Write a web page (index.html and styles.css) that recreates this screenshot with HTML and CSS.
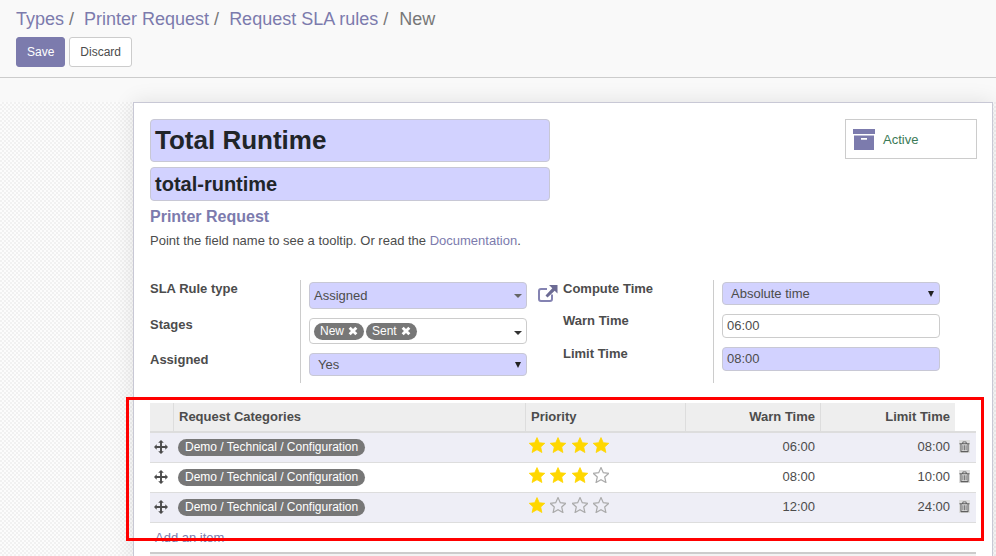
FILE: index.html
```html
<!DOCTYPE html>
<html lang="en">
<head>
    <meta charset="UTF-8">
    <meta name="viewport" content="width=device-width, initial-scale=1.0">
    <title>Request SLA rules - New</title>
    <link rel="stylesheet" href="styles.css">
</head>
<body>
    <svg class="icon-defs" width="0" height="0">
        <defs>
            <polygon id="star-shape" points="8,0.6 10.3,5.7 15.8,6.3 11.7,10 12.9,15.5 8,12.7 3.1,15.5 4.3,10 0.2,6.3 5.7,5.7"/>
            <path id="move-shape" d="M7 0 L10.2 3.1 H8.1 V6.9 H11.9 V4.8 L15 8 L11.9 11.2 V9.1 H8.1 V12.9 H10.2 L7 16 L3.8 12.9 H5.9 V9.1 H2.1 V11.2 L-1 8 L2.1 4.8 V6.9 H5.9 V3.1 H3.8 Z"/>
            <g id="trash-shape">
                <path d="M4 1.2 H7.5 L8.3 3 H11 V4.1 H10 V11.6 Q10 12.4 9.2 12.4 H2.3 Q1.5 12.4 1.5 11.6 V4.1 H0.5 V3 H3.2 Z M4.4 3 H7.1 L6.8 2.1 H4.7 Z M2.6 4.1 V11.3 H8.9 V4.1 Z M3.7 5.2 H4.5 V10.4 H3.7 Z M5.4 5.2 H6.2 V10.4 H5.4 Z M7 5.2 H7.8 V10.4 H7 Z" fill-rule="evenodd"/>
            </g>
        </defs>
    </svg>

    <!-- Control panel -->
    <header class="control-panel">
        <ol class="breadcrumb">
            <li><a>Types</a></li>
            <li><a>Printer Request</a></li>
            <li><a>Request SLA rules</a></li>
            <li class="active">New</li>
        </ol>
        <div class="buttons">
            <button class="btn btn-primary">Save</button>
            <button class="btn">Discard</button>
        </div>
    </header>

    <main class="view">
        <div class="sheet">
            <div class="title-row">
                <div class="title-fields">
                    <div class="req title-input">Total Runtime</div>
                    <div class="req code-input">total-runtime</div>
                    <div class="parent-name">Printer Request</div>
                    <p class="help">Point the field name to see a tooltip. Or read the <a>Documentation</a>.</p>
                </div>
                <div class="stat-button">
                    <svg class="archive-icon" width="22" height="21" viewBox="0 0 22 21">
                        <rect x="0" y="0" width="22" height="5"/>
                        <path d="M1 6.5 H21 V21 H1 Z M8 9 V10.8 H14 V9 Z" fill-rule="evenodd"/>
                    </svg>
                    <span>Active</span>
                </div>
            </div>

            <div class="groups">
                <div class="group group-left">
                    <div class="labels">
                        <label>SLA Rule type</label>
                        <label>Stages</label>
                        <label>Assigned</label>
                    </div>
                    <div class="fields">
                        <div class="field-row">
                            <div class="req select select-tall">Assigned<i class="caret caret-gray"></i></div>
                        </div>
                        <div class="field-row">
                            <div class="tags-input">
                                <span class="tag">New <svg class="tag-x" width="10" height="10" viewBox="0 0 9 9"><path d="M1.5 1.5 L7.5 7.5 M7.5 1.5 L1.5 7.5"/></svg></span>
                                <span class="tag">Sent <svg class="tag-x" width="10" height="10" viewBox="0 0 9 9"><path d="M1.5 1.5 L7.5 7.5 M7.5 1.5 L1.5 7.5"/></svg></span>
                                <i class="caret caret-push"></i>
                            </div>
                        </div>
                        <div class="field-row">
                            <div class="req select select-yes">Yes<i class="caret caret-big"></i></div>
                        </div>
                    </div>
                </div>

                <svg class="external-icon" width="20" height="17" viewBox="0 0 20 17">
                    <path d="M14 9.5 V14 Q14 16 12 16 H3 Q1 16 1 14 V6 Q1 4 3 4 H9" fill="none" stroke="#8483b2" stroke-width="2"/>
                    <path d="M11 0 H19.5 V8.5 L16.7 5.7 L9.5 12.5 L7.5 10.5 L14.3 3.3 Z" fill="#6c6b94"/>
                </svg>

                <div class="group group-right">
                    <div class="labels">
                        <label>Compute Time</label>
                        <label>Warn Time</label>
                        <label>Limit Time</label>
                    </div>
                    <div class="fields">
                        <div class="field-row">
                            <div class="req select select-time">Absolute time<i class="caret caret-big"></i></div>
                        </div>
                        <div class="field-row">
                            <div class="text-input">06:00</div>
                        </div>
                        <div class="field-row">
                            <div class="req text-input">08:00</div>
                        </div>
                    </div>
                </div>
            </div>

            <section class="lines">
                <table class="list">
                    <thead>
                        <tr>
                            <th class="col-handle"></th>
                            <th class="col-cat">Request Categories</th>
                            <th class="col-priority">Priority</th>
                            <th class="col-warn num">Warn Time</th>
                            <th class="col-limit num">Limit Time</th>
                            <th class="col-del"></th>
                        </tr>
                    </thead>
                    <tbody>
                        <tr class="odd">
                            <td><svg class="move" width="14" height="16" viewBox="-1 0 16 16"><use href="#move-shape"/></svg></td>
                            <td class="cat"><span class="chip">Demo / Technical / Configuration</span></td>
                            <td>
                                <div class="stars">
                                    <svg class="star on" viewBox="0 0 16 16"><use href="#star-shape"/></svg>
                                    <svg class="star on" viewBox="0 0 16 16"><use href="#star-shape"/></svg>
                                    <svg class="star on" viewBox="0 0 16 16"><use href="#star-shape"/></svg>
                                    <svg class="star on" viewBox="0 0 16 16"><use href="#star-shape"/></svg>
                                </div>
                            </td>
                            <td class="num warn">06:00</td>
                            <td class="num">08:00</td>
                            <td class="del"><svg class="trash" width="11" height="13" viewBox="0 0 11.5 13"><use href="#trash-shape"/></svg></td>
                        </tr>
                        <tr>
                            <td><svg class="move" width="14" height="16" viewBox="-1 0 16 16"><use href="#move-shape"/></svg></td>
                            <td class="cat"><span class="chip">Demo / Technical / Configuration</span></td>
                            <td>
                                <div class="stars">
                                    <svg class="star on" viewBox="0 0 16 16"><use href="#star-shape"/></svg>
                                    <svg class="star on" viewBox="0 0 16 16"><use href="#star-shape"/></svg>
                                    <svg class="star on" viewBox="0 0 16 16"><use href="#star-shape"/></svg>
                                    <svg class="star" viewBox="0 0 16 16"><use href="#star-shape"/></svg>
                                </div>
                            </td>
                            <td class="num warn">08:00</td>
                            <td class="num">10:00</td>
                            <td class="del"><svg class="trash" width="11" height="13" viewBox="0 0 11.5 13"><use href="#trash-shape"/></svg></td>
                        </tr>
                        <tr class="odd">
                            <td><svg class="move" width="14" height="16" viewBox="-1 0 16 16"><use href="#move-shape"/></svg></td>
                            <td class="cat"><span class="chip">Demo / Technical / Configuration</span></td>
                            <td>
                                <div class="stars">
                                    <svg class="star on" viewBox="0 0 16 16"><use href="#star-shape"/></svg>
                                    <svg class="star" viewBox="0 0 16 16"><use href="#star-shape"/></svg>
                                    <svg class="star" viewBox="0 0 16 16"><use href="#star-shape"/></svg>
                                    <svg class="star" viewBox="0 0 16 16"><use href="#star-shape"/></svg>
                                </div>
                            </td>
                            <td class="num warn">12:00</td>
                            <td class="num">24:00</td>
                            <td class="del"><svg class="trash" width="11" height="13" viewBox="0 0 11.5 13"><use href="#trash-shape"/></svg></td>
                        </tr>
                    </tbody>
                </table>
                <div class="add-line"><a>Add an item</a></div>
                <div class="list-foot"></div>
                <!-- Red highlight drawn over the screenshot -->
                <div class="highlight"></div>
            </section>
        </div>
    </main>
</body>
</html>
```

FILE: styles.css
```css
* {
    box-sizing: border-box;
}
html, body {
    height: 100%;
}
body {
    margin: 0;
    overflow: hidden;
    font-family: "Liberation Sans", Arial, sans-serif;
    font-size: 13px;
    color: #4c4c4c;
    background-color: #f9f9f9;
}
a {
    color: #7c7bad;
}
.icon-defs {
    position: absolute;
}

/* Control panel */
.control-panel {
    height: 78px;
    padding: 10px 16px 0;
    border-bottom: 1px solid #ccc;
}
.breadcrumb {
    display: flex;
    margin: 0;
    padding: 0;
    list-style: none;
    font-size: 18px;
    line-height: 18px;
}
.breadcrumb li:not(:last-child)::after {
    content: "/";
    color: #777;
    padding: 0 10px 0 5px;
}
.breadcrumb li:nth-child(3)::after {
    padding-right: 11px;
}
.breadcrumb .active {
    color: #777;
}
.buttons {
    display: flex;
    gap: 4px;
    margin-top: 9px;
}
.btn {
    height: 30px;
    padding: 0 10px;
    font-family: inherit;
    font-size: 12px;
    color: #4c4c4c;
    background-color: #fff;
    border: 1px solid #ccc;
    border-radius: 3px;
}
.btn-primary {
    color: #fff;
    background-color: #7c7bad;
    border-color: #7c7bad;
}

/* Sheet */
.view {
    height: 478px;
    padding-top: 24px;
    background-image:
        linear-gradient(#f9f9f9, #f9f9f9),
        repeating-conic-gradient(#f1f1f1 0 25%, #fcfcfc 0 50%);
    background-size: 100% 24px, 4px 4px;
    background-repeat: no-repeat, repeat;
}
.sheet {
    position: relative;
    width: 860px;
    height: 460px;
    margin-left: 133px;
    padding: 16px 16px 0;
    background-color: #fff;
    border: 1px solid #c8c8d5;
    box-shadow: 0 0 20px rgba(0, 0, 0, 0.1);
}
.req {
    background-color: #d2d2ff;
    border: 1px solid #c8c8d5;
    border-radius: 4px;
}
.title-row {
    display: flex;
    justify-content: space-between;
    align-items: flex-start;
}
.title-fields {
    width: 400px;
}
.title-input {
    height: 43px;
    padding-left: 4px;
    font-size: 26px;
    font-weight: bold;
    line-height: 41px;
    color: #212529;
}
.code-input {
    height: 34px;
    margin-top: 5px;
    padding-left: 4px;
    font-size: 20px;
    font-weight: bold;
    line-height: 32px;
    color: #212529;
}
.parent-name {
    margin-top: 7px;
    font-size: 16px;
    font-weight: bold;
    line-height: 18px;
    color: #7c7bad;
}
.help {
    margin: 7px 0 0;
    line-height: 16px;
}
.stat-button {
    display: flex;
    align-items: center;
    gap: 8px;
    width: 132px;
    height: 40px;
    margin-right: -1px;
    padding-left: 7px;
    color: #3b7a57;
    border: 1px solid #ccc;
}
.archive-icon {
    fill: #7c7bad;
}

/* Form groups */
.groups {
    display: flex;
    align-items: flex-start;
    margin-top: 31px;
}
.group {
    display: flex;
}
.labels {
    width: 150px;
    padding-top: 2px;
}
.labels label {
    display: block;
    font-weight: bold;
    line-height: 13px;
}
.fields {
    width: 227px;
    padding: 2px 0 0 8px;
    border-left: 1px solid #ccc;
}
.group-left .labels label:nth-child(1),
.group-left .field-row:nth-child(1) {
    height: 36px;
}
.group-left .labels label:nth-child(2),
.group-left .field-row:nth-child(2) {
    height: 35px;
}
.group-left .field-row:nth-child(3) {
    height: 30px;
}
.group-right .labels label:nth-child(1),
.group-right .field-row:nth-child(1) {
    height: 32px;
}
.group-right .labels label:nth-child(2),
.group-right .field-row:nth-child(2) {
    height: 33px;
}
.group-right .field-row:nth-child(3) {
    height: 36px;
}
.external-icon {
    flex: none;
    margin: 5px 5px 0 11px;
}
.select {
    display: flex;
    justify-content: space-between;
    align-items: center;
    padding-right: 4px;
}
.select-tall {
    height: 27px;
    padding-left: 4px;
}
.select-yes {
    height: 23px;
    padding-left: 8px;
}
.select-time {
    height: 23px;
    padding-left: 8px;
}
.caret {
    width: 0;
    height: 0;
    border-left: 4px solid transparent;
    border-right: 4px solid transparent;
    border-top: 4px solid #333;
}
.caret-gray {
    border-top-color: #666;
}
.caret-big {
    border-left-width: 3px;
    border-right-width: 3px;
    border-top: 6px solid #222;
    margin-right: 1px;
}
.caret-push {
    margin-left: auto;
    margin-right: 4px;
    margin-top: 3px;
}
.tags-input {
    display: flex;
    align-items: center;
    gap: 2px;
    height: 26px;
    padding-left: 4px;
    border: 1px solid #ccc;
    border-radius: 4px;
}
.tag {
    display: flex;
    align-items: center;
    gap: 4px;
    height: 17px;
    padding: 0 6px;
    font-size: 12px;
    color: #fff;
    background-color: #777;
    border-radius: 9px;
}
.tag-x {
    fill: none;
    stroke: #fff;
    stroke-width: 2.6;
}
.text-input {
    height: 24px;
    padding-left: 4px;
    line-height: 22px;
    border: 1px solid #ccc;
    border-radius: 4px;
}
.text-input.req {
    border-color: #c8c8d5;
}

/* One2many list */
.lines {
    position: relative;
    width: 826px;
    margin-top: 20px;
}
.list {
    width: 100%;
    table-layout: fixed;
    border-collapse: separate;
    border-spacing: 0;
}
.list th {
    height: 30px;
    padding: 0 5px 2px;
    text-align: left;
    font-weight: bold;
    background-color: #eee;
    border-right: 1px solid #ddd;
    border-bottom: 2px solid #ddd;
}
.list th.num, .list td.num {
    text-align: right;
}
.list td.num {
    padding-bottom: 2px;
}
.list td.warn {
    padding-right: 6px;
}
.list th.col-limit {
    border-right: none;
}
.list th.col-del {
    background-color: #fff;
    border-right: none;
}
.col-handle {
    width: 24px;
}
.col-priority {
    width: 160px;
}
.col-warn {
    width: 135px;
}
.col-limit {
    width: 134px;
}
.col-del {
    width: 21px;
}
.list td {
    height: 30px;
    padding: 0 5px;
    border-bottom: 1px solid #ddd;
}
.list tr.odd td {
    background-color: #eeeef6;
}
.list td:first-child {
    padding: 0 0 0 4px;
}
.list td.cat {
    padding-left: 4px;
}
.move {
    display: block;
    margin-top: -2px;
    fill: #4c4c4c;
}
.chip {
    display: inline-block;
    height: 17px;
    padding: 0 7px;
    font-size: 12px;
    line-height: 17px;
    color: #fff;
    background-color: #777;
    border-radius: 9px;
    vertical-align: middle;
    margin-top: -1px;
}
.stars {
    display: flex;
    gap: 5.3px;
    margin: -6px 0 0 -2px;
}
.star {
    width: 16px;
    height: 16px;
    fill: none;
    stroke: #aaa;
    stroke-width: 1.2;
}
.star.on {
    fill: #ffd700;
    stroke: #ffd700;
    stroke-width: 0.8;
}
.list td.del {
    padding: 0 0 3px 4px;
}
.trash {
    display: block;
    fill: #5f5f5f;
    background-color: #ddd;
}
.add-line {
    height: 29px;
    padding: 7px 0 0 5px;
    line-height: 15px;
}
.list-foot {
    height: 20px;
    background-color: #f3f3f3;
    border-top: 2px solid #ccc;
}
.highlight {
    position: absolute;
    left: -24px;
    top: -6px;
    width: 858px;
    height: 144px;
    border: 3px solid #f00;
    pointer-events: none;
}
```
